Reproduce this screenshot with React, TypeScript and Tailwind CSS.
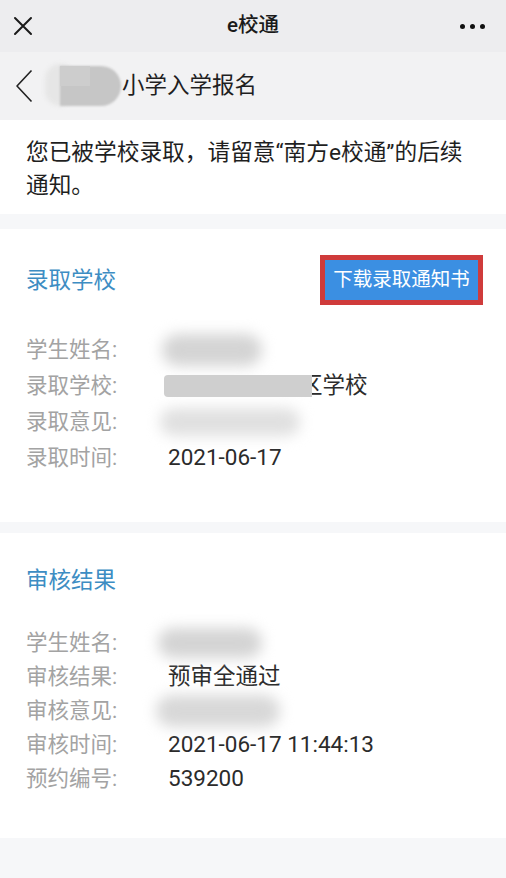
import React from "react";

const font = { fontFamily: "Roboto, 'Noto Sans CJK SC', sans-serif" };

function Blur({ w, h, className = "" }: { w: string; h: string; className?: string }) {
  return <div className={`${w} ${h} ${className} rounded-full bg-[#d4d4d4] blur-[7px]`} />;
}

function Row({ label, children, h }: { label: string; children?: React.ReactNode; h: string }) {
  return (
    <div className={`flex items-center ${h}`}>
      <div className="w-[142px] shrink-0 text-[21.5px] text-[#a3a3a3]">{label}</div>
      <div className="flex items-center text-[22.5px] text-[#2b2b2b]">{children}</div>
    </div>
  );
}

export default function App() {
  return (
    <div className="w-[506px] h-[878px] bg-[#f6f7f9] overflow-hidden" style={font}>
      {/* top bar */}
      <div className="h-[52px] bg-[#ededef] grid grid-cols-[1fr_auto_1fr] items-center">
        <div className="pl-[13px]">
          <svg width="20" height="20" viewBox="0 0 20 20">
            <path d="M2 2 L18 18 M18 2 L2 18" stroke="#1a1a1a" strokeWidth="2" strokeLinecap="round" />
          </svg>
        </div>
        <div className="text-[20.5px] text-[#1a1a1a] font-medium pb-[2px]">e校通</div>
        <div className="flex justify-end pr-[21px] gap-[5px]">
          <span className="w-[5px] h-[5px] rounded-full bg-[#111]" />
          <span className="w-[5px] h-[5px] rounded-full bg-[#111]" />
          <span className="w-[5px] h-[5px] rounded-full bg-[#111]" />
        </div>
      </div>
      {/* second bar */}
      <div className="h-[68px] bg-[#f2f2f3] flex items-center">
        <div className="pl-[15px] w-[45px]">
          <svg width="18" height="34" viewBox="0 0 18 34">
            <path d="M16.5 1.5 L2 17 L16.5 32.5" fill="none" stroke="#222" strokeWidth="1.6" strokeLinejoin="round" />
          </svg>
        </div>
        <div className="relative w-[76px] h-[42px] -mt-[2px]">
          <div className="absolute left-0 top-0 w-[30px] h-[42px] rounded-full bg-[#e6e6e6] blur-[2px]" />
          <div className="absolute left-[15px] top-[2px] w-[61px] h-[40px] rounded-r-full bg-[#c6c6c6] blur-[1px]" />
          <div className="absolute left-[15px] top-[2px] w-[30px] h-[20px] bg-[#cdcdcd]" />
        </div>
        <div className="text-[22.5px] text-[#1f1f1f] pl-[1px]">小学入学报名</div>
      </div>
      {/* notice */}
      <div className="bg-white pt-[16px] pb-[12px] px-[26px] text-[22.7px] leading-[33px] text-[#1f1f1f]">
        您已被学校录取，请留意“南方e校通”的后续通知。
      </div>
      {/* card 1 */}
      <div className="mt-[15px] bg-white pt-[26px] pb-[46px] pl-[26px] pr-[23px]">
        <div className="flex items-center justify-between h-[50px]">
          <div className="text-[22.5px] text-[#3d8dc3] pt-[2px]">录取学校</div>
          <div className="border-[5px] border-[#cf3b3b] bg-[#3b8fe2] h-[50px] w-[163px] flex items-center justify-center">
            <span className="text-[19.5px] text-white">下载录取通知书</span>
          </div>
        </div>
        <div className="mt-[27px]">
          <Row label="学生姓名:" h="h-[36px]">
            <Blur w="w-[100px]" h="h-[32px]" className="-ml-[6px]" />
          </Row>
          <Row label="录取学校:" h="h-[36px]">
            <div className="relative flex items-center">
              <div className="w-[148px] h-[22px] rounded-l-[4px] bg-[#cfcfcf] -ml-[4px] z-10" />
              <span className="-ml-[12px]">区学校</span>
            </div>
          </Row>
          <Row label="录取意见:" h="h-[36px]">
            <Blur w="w-[140px]" h="h-[28px]" className="-ml-[8px] bg-[#e0e0e0]" />
          </Row>
          <Row label="录取时间:" h="h-[36px]">
            2021-06-17
          </Row>
        </div>
      </div>
      {/* card 2 */}
      <div className="mt-[11px] bg-white pt-[33px] pb-[42px] pl-[26px] pr-[23px]">
        <div className="h-[30px] flex items-center text-[22.5px] text-[#3d8dc3]">审核结果</div>
        <div className="mt-[30px]">
          <Row label="学生姓名:" h="h-[34px]">
            <Blur w="w-[104px]" h="h-[30px]" className="-ml-[10px]" />
          </Row>
          <Row label="审核结果:" h="h-[34px]">
            预审全通过
          </Row>
          <Row label="审核意见:" h="h-[34px]">
            <Blur w="w-[124px]" h="h-[32px]" className="-ml-[12px] bg-[#d8d8d8]" />
          </Row>
          <Row label="审核时间:" h="h-[34px]">
            2021-06-17 11:44:13
          </Row>
          <Row label="预约编号:" h="h-[34px]">
            539200
          </Row>
        </div>
      </div>
    </div>
  );
}
